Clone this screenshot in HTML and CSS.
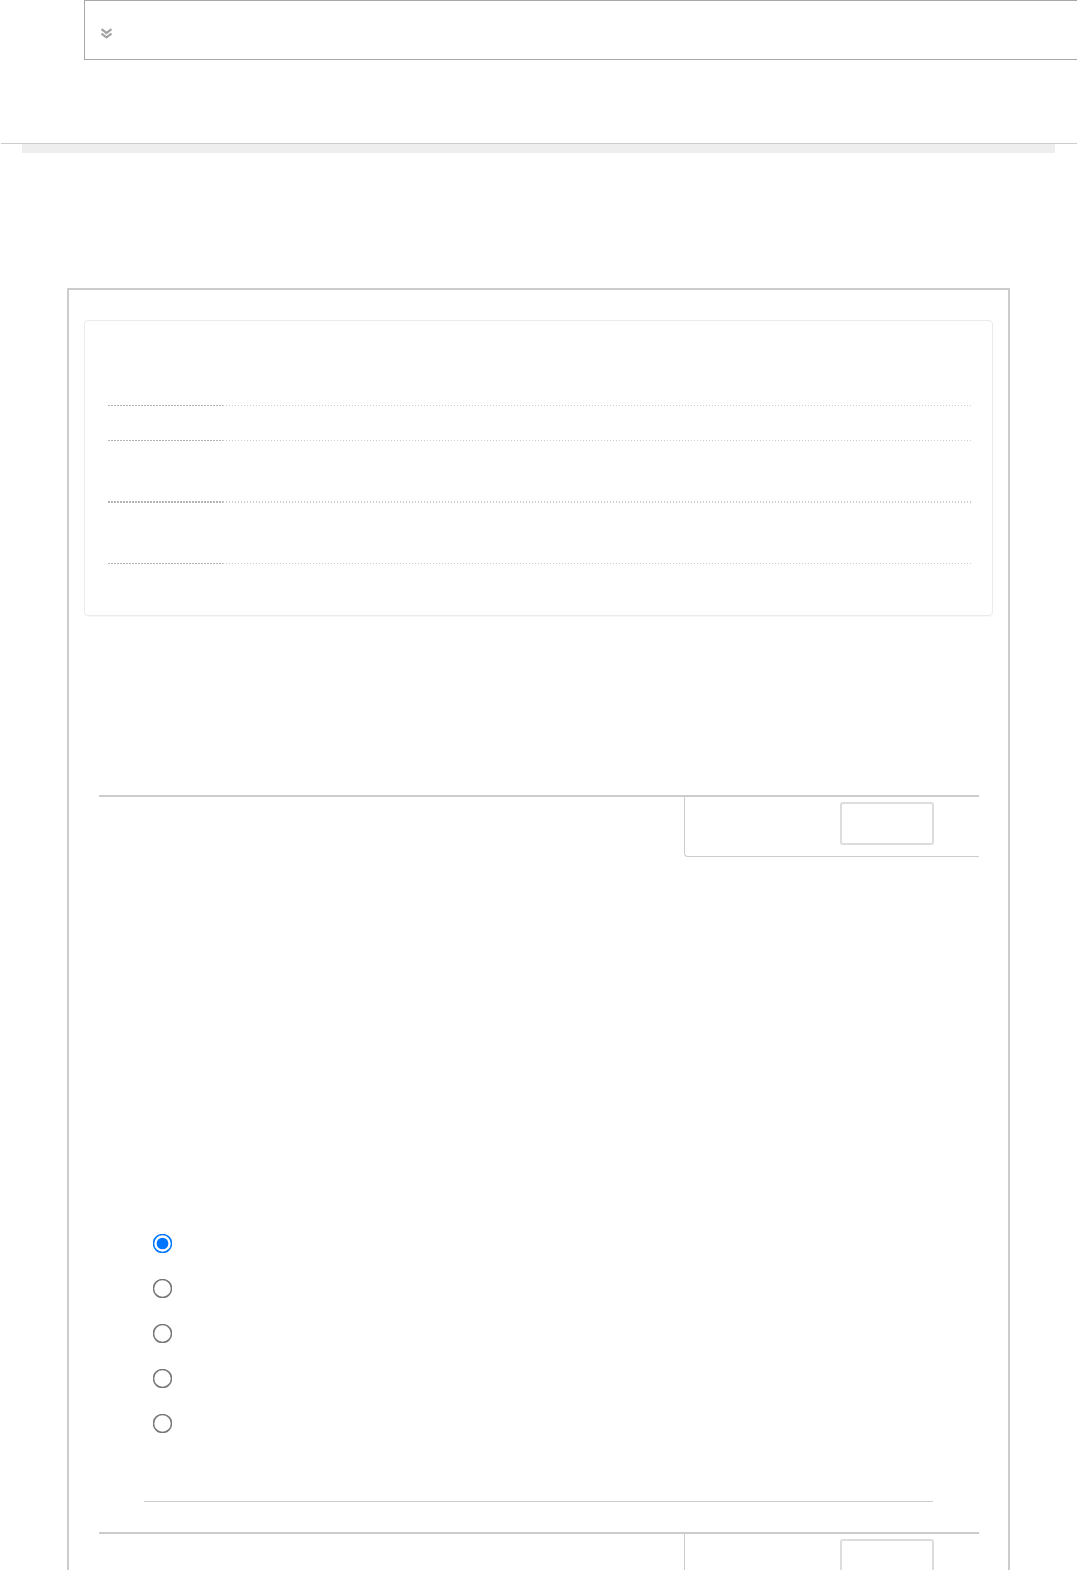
FILE: index.html
```html
<!DOCTYPE html>
<html>
<head>
<meta charset="utf-8">
<link rel="stylesheet" href="styles.css">
</head>
<body>
<div class="page">
  <div class="topbox">
    <svg class="chev" width="13" height="11" viewBox="0 0 13 11"><polyline points="1.5,1.2 6.5,5 11.5,1.2" fill="none" stroke="#a3a3a3" stroke-width="2.2"/><polyline points="1.5,5.6 6.5,9.4 11.5,5.6" fill="none" stroke="#a3a3a3" stroke-width="2.2"/></svg>
  </div>
  <div class="rule"></div>
  <div class="graybar"></div>
  <div class="panel">
    <div class="card">
      <div class="dots l1"><span class="dk"></span><span class="lt"></span></div>
      <div class="dots l2"><span class="dk"></span><span class="lt"></span></div>
      <div class="dots l3 thick"><span class="dk"></span><span class="lt"></span></div>
      <div class="dots l4"><span class="dk"></span><span class="lt"></span></div>
    </div>
    <div class="trow first">
      <div class="tcell-left"></div>
      <div class="tcell-right"><div class="btn"></div></div>
    </div>
    <div class="options">
      <label class="opt"><input type="radio" name="o" checked></label>
      <label class="opt"><input type="radio" name="o"></label>
      <label class="opt"><input type="radio" name="o"></label>
      <label class="opt"><input type="radio" name="o"></label>
      <label class="opt"><input type="radio" name="o"></label>
    </div>
    <div class="thinrule"></div>
    <div class="trow second">
      <div class="tcell-left"></div>
      <div class="tcell-right"><div class="btn"></div></div>
    </div>
  </div>
</div>
</body>
</html>
```
FILE: styles.css
```css
html, body {
  margin: 0;
  padding: 0;
  background: #fff;
  font-family: "Liberation Sans", Arial, sans-serif;
}
.page {
  width: 1077px;
  height: 1570px;
  overflow: hidden;
}
.topbox {
  margin-left: 84px;
  width: 1000px;
  height: 60px;
  box-sizing: border-box;
  border: 1px solid #a8a8a8;
  border-right: none;
  padding: 27px 0 0 15px;
}
.chev { display: block; }
.rule {
  margin-top: 83px;
  margin-left: 1px;
  height: 1px;
  background: #cccccc;
}
.graybar {
  margin: 0 22px;
  height: 9px;
  background: #eeeeee;
}
.panel {
  margin-top: 135px;
  margin-left: 67px;
  width: 943px;
  height: 1400px;
  box-sizing: border-box;
  border: 2px solid #cccccc;
  border-bottom: none;
  padding: 30px 15px 0;
}
.card {
  height: 296px;
  box-sizing: border-box;
  border: 1px solid #ebebeb;
  border-radius: 4px;
  box-shadow: 0 1px 1px rgba(0,0,0,0.03);
  padding: 0 21px 0 23px;
  display: flex;
  flex-direction: column;
}
.dots {
  display: flex;
  height: 1px;
}
.dots .dk {
  width: 115px;
  background: repeating-linear-gradient(90deg, #b4b4b4 0 2px, transparent 2px 3px);
}
.dots .lt {
  flex: 1;
  background: repeating-linear-gradient(90deg, #cccccc 0 1px, transparent 1px 3px);
}
.dots.thick { height: 2px; }
.l1 { margin-top: 84px; }
.l2 { margin-top: 34px; }
.l3 { margin-top: 60px; }
.l4 { margin-top: 60px; }
.trow {
  margin: 0 14px 0 15px;
  border-top: 2px solid #cccccc;
  display: flex;
}
.trow.first { margin-top: 179px; }
.trow.second { margin-top: 30px; }
.tcell-left { flex: 1; }
.tcell-right {
  width: 295px;
  height: 60px;
  box-sizing: border-box;
  border-left: 1px solid #cccccc;
  border-bottom: 1px solid #cccccc;
  border-bottom-left-radius: 4px;
  padding: 5px 0 0 155px;
}
.btn {
  width: 94px;
  height: 43px;
  box-sizing: border-box;
  border: 2px solid #dddddd;
  border-radius: 3px;
}
.options {
  margin-top: 376px;
  display: flex;
  flex-direction: column;
}
.opt {
  display: block;
  height: 45px;
}
.opt input {
  display: block;
  width: 13px;
  height: 13px;
  margin: 3.5px 0 0 72px;
  transform: scale(1.5);
}
.thinrule {
  margin-top: 43px;
  margin-left: 60px;
  width: 789px;
  height: 1px;
  background: #cccccc;
}
```
